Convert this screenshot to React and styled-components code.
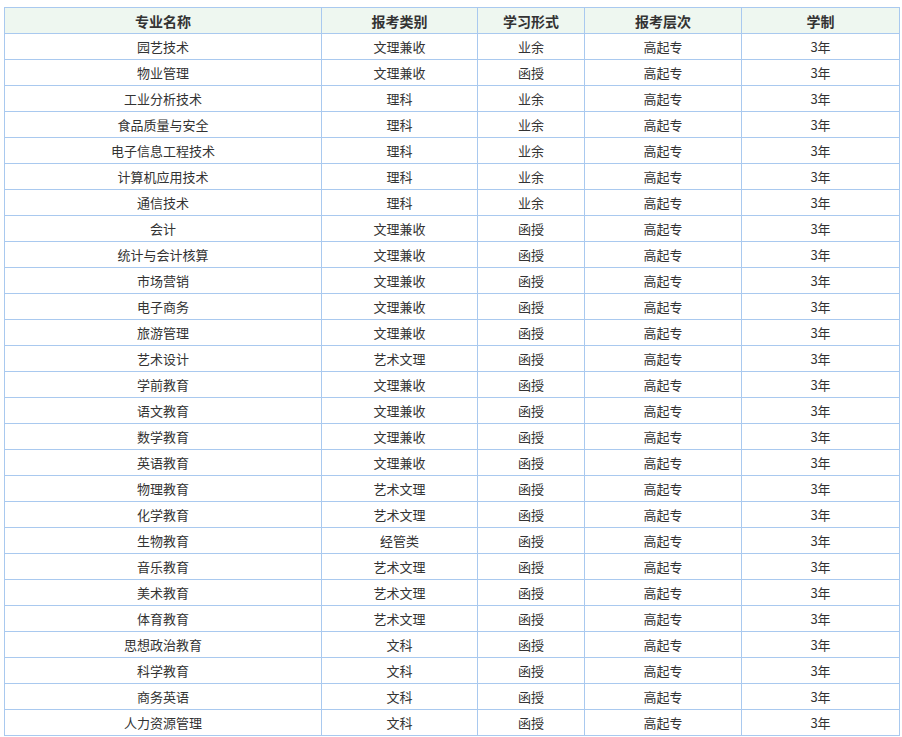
import React from "react";
import styled, { createGlobalStyle } from "styled-components";

const G = createGlobalStyle`
  body { margin: 0; padding: 7px 0 0 4px; background:#fff; font-family: "Microsoft YaHei","Noto Sans CJK SC",sans-serif; }
`;
const Table = styled.table`
  border-collapse: collapse; width: 895px; table-layout: fixed;
  font-size: 13px; color: #333;
`;
const Th = styled.th`
  background: #eef7f0; border: 1px solid #a9c9ef; height: 25px; padding: 0;
  font-weight: bold; font-size: 14px; color: #333; width: ${p => p.w}px;
`;
const Td = styled.td`
  border: 1px solid #a9c9ef; height: 25px; padding: 0; text-align: center;
`;
const rows = `园艺技术,文理兼收,业余
物业管理,文理兼收,函授
工业分析技术,理科,业余
食品质量与安全,理科,业余
电子信息工程技术,理科,业余
计算机应用技术,理科,业余
通信技术,理科,业余
会计,文理兼收,函授
统计与会计核算,文理兼收,函授
市场营销,文理兼收,函授
电子商务,文理兼收,函授
旅游管理,文理兼收,函授
艺术设计,艺术文理,函授
学前教育,文理兼收,函授
语文教育,文理兼收,函授
数学教育,文理兼收,函授
英语教育,文理兼收,函授
物理教育,艺术文理,函授
化学教育,艺术文理,函授
生物教育,经管类,函授
音乐教育,艺术文理,函授
美术教育,艺术文理,函授
体育教育,艺术文理,函授
思想政治教育,文科,函授
科学教育,文科,函授
商务英语,文科,函授
人力资源管理,文科,函授`.split("\n").map(r => r.split(","));
const heads = [["专业名称",316],["报考类别",155],["学习形式",106],["报考层次",156],["学制",157]];
export default function App() {
  return (<>
    <G />
    <Table>
      <thead><tr>{heads.map(([h,w]) => <Th key={h} w={w}>{h}</Th>)}</tr></thead>
      <tbody>{rows.map((r,i) => <tr key={i}><Td>{r[0]}</Td><Td>{r[1]}</Td><Td>{r[2]}</Td><Td>高起专</Td><Td>3年</Td></tr>)}</tbody>
    </Table>
  </>);
}
